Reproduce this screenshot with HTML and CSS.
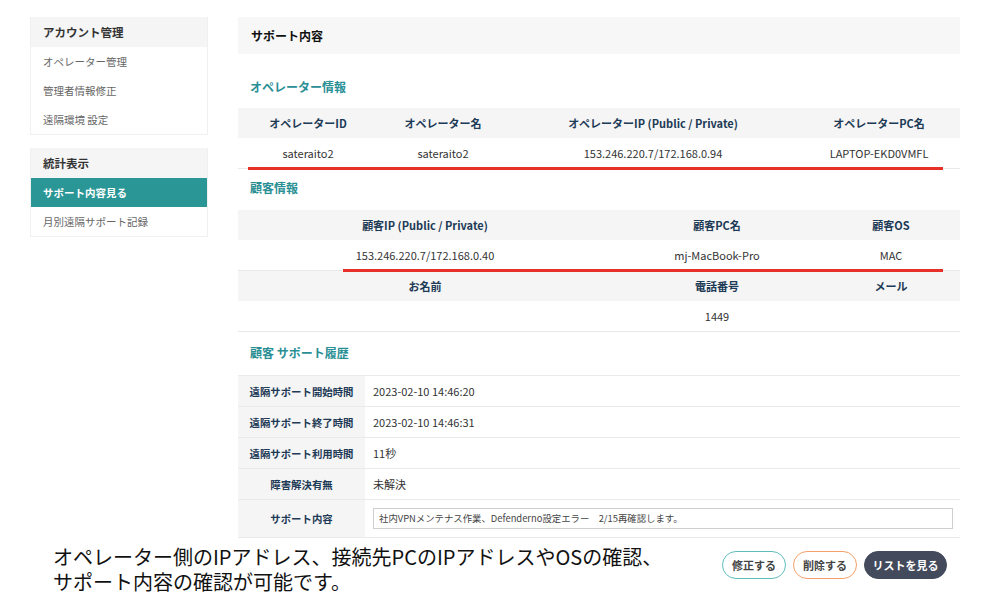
FILE: index.html
```html
<!DOCTYPE html>
<html lang="ja">
<head>
<meta charset="utf-8">
<link rel="stylesheet" href="styles.css">
</head>
<body>
<div class="page">
  <aside class="sidebar">
    <div class="side-box">
      <div class="side-head">アカウント管理</div>
      <div class="side-item">オペレーター管理</div>
      <div class="side-item">管理者情報修正</div>
      <div class="side-item">遠隔環境 設定</div>
    </div>
    <div class="side-box">
      <div class="side-head">統計表示</div>
      <div class="side-item active">サポート内容見る</div>
      <div class="side-item">月別遠隔サポート記録</div>
    </div>
  </aside>
  <main class="main">
    <div class="main-head">サポート内容</div>

    <div class="sec-title t1">オペレーター情報</div>
    <div class="tbl-wrap">
      <div class="grid op">
        <div class="th">オペレーターID</div>
        <div class="th">オペレーター名</div>
        <div class="th">オペレーターIP (Public / Private)</div>
        <div class="th">オペレーターPC名</div>
        <div class="td">sateraito2</div>
        <div class="td">sateraito2</div>
        <div class="td">153.246.220.7/172.168.0.94</div>
        <div class="td">LAPTOP-EKD0VMFL</div>
      </div>
      <span class="redline r1"></span>
    </div>

    <div class="sec-title t2">顧客情報</div>
    <div class="tbl-wrap">
      <div class="grid cu">
        <div class="th">顧客IP (Public / Private)</div>
        <div class="th">顧客PC名</div>
        <div class="th">顧客OS</div>
        <div class="td">153.246.220.7/172.168.0.40</div>
        <div class="td">mj-MacBook-Pro</div>
        <div class="td">MAC</div>
        <div class="th">お名前</div>
        <div class="th">電話番号</div>
        <div class="th">メール</div>
        <div class="td"></div>
        <div class="td">1449</div>
        <div class="td"></div>
      </div>
      <span class="redline r2"></span>
    </div>

    <div class="sec-title t3">顧客 サポート履歴</div>
    <div class="hist">
      <div class="hrow"><div class="hl">遠隔サポート開始時間</div><div class="hv">2023-02-10 14:46:20</div></div>
      <div class="hrow"><div class="hl">遠隔サポート終了時間</div><div class="hv">2023-02-10 14:46:31</div></div>
      <div class="hrow"><div class="hl">遠隔サポート利用時間</div><div class="hv">11秒</div></div>
      <div class="hrow"><div class="hl">障害解決有無</div><div class="hv">未解決</div></div>
      <div class="hrow last"><div class="hl">サポート内容</div><div class="hv"><div class="inp">社内VPNメンテナス作業、Defenderno設定エラー　2/15再確認します。</div></div></div>
    </div>
  </main>
</div>
<div class="footer">
  <div class="caption">
    <div class="cline">オペレーター側のIPアドレス、接続先PCのIPアドレスやOSの確認、</div>
    <div class="cline">サポート内容の確認が可能です。</div>
  </div>
  <div class="btns">
    <span class="btn edit">修正する</span>
    <span class="btn del">削除する</span>
    <span class="btn list">リストを見る</span>
  </div>
</div>
</body>
</html>
```
FILE: styles.css
```css
* { box-sizing: border-box; }
html, body { margin: 0; padding: 0; background: #fff; }
body {
  width: 1000px;
  height: 613px;
  overflow: hidden;
  font-family: "Noto Sans CJK JP", "Noto Sans", sans-serif;
  color: #333;
}
.page {
  display: flex;
  gap: 30px;
  padding: 17px 0 0 30px;
}
.sidebar {
  width: 178px;
  display: flex;
  flex-direction: column;
  gap: 13px;
}
.side-box {
  border: 1px solid #f0f0f0;
  border-top: 0;
  background: #fff;
}
.side-head {
  height: 30px;
  line-height: 30px;
  background: #f5f5f5;
  padding-left: 12px;
  font-size: 11.5px;
  font-weight: bold;
  color: #333;
}
.side-item {
  height: 29px;
  line-height: 29px;
  padding-left: 12px;
  font-size: 10.5px;
  color: #666;
}
.side-item.active {
  background: #2a9696;
  color: #fff;
  font-weight: bold;
}
.main {
  width: 722px;
}
.main-head {
  height: 37px;
  line-height: 37px;
  background: #f7f7f7;
  padding-left: 13px;
  font-size: 12px;
  font-weight: bold;
  color: #111;
}
.sec-title {
  padding-left: 12px;
  line-height: 18px;
  font-size: 12px;
  font-weight: bold;
  color: #2a8f95;
}
.t1 { padding-top: 24px; padding-bottom: 12px; }
.t2 { padding-top: 10px; padding-bottom: 13px; }
.t3 { padding-top: 12px; padding-bottom: 13px; }
.tbl-wrap { position: relative; }
.grid { display: grid; }
.grid.op { grid-template-columns: 140px 130px 290px 162px; }
.grid.cu { grid-template-columns: 374px 210px 138px; }
.th {
  height: 30px;
  line-height: 30px;
  background: #f5f5f5;
  text-align: center;
  font-size: 11px;
  font-weight: bold;
  color: #1d3a56;
}
.td {
  height: 31px;
  line-height: 30px;
  text-align: center;
  font-size: 11px;
  color: #333;
  border-bottom: 1px solid #e8e8e8;
}
.redline {
  position: absolute;
  height: 3px;
  background: #e8302a;
}
.r1 { left: 10px; width: 695px; top: 59px; }
.r2 { left: 105px; width: 600px; top: 59px; }
.hist { border-top: 1px solid #eaeaea; }
.hrow {
  display: flex;
  height: 31px;
  border-bottom: 1px solid #eaeaea;
}
.hrow.last { height: 38px; }
.hl {
  width: 127px;
  background: #f5f5f5;
  display: flex;
  align-items: center;
  justify-content: center;
  font-size: 10.4px;
  font-weight: bold;
  color: #1d3a56;
  white-space: nowrap;
}
.hv {
  flex: 1;
  display: flex;
  align-items: center;
  padding-left: 8px;
  font-size: 11px;
  color: #333;
}
.inp {
  width: 580px;
  height: 21px;
  line-height: 19px;
  border: 1px solid #cfcfcf;
  padding-left: 5px;
  font-size: 9.4px;
  color: #444;
}
.footer {
  display: flex;
  align-items: flex-start;
  justify-content: space-between;
  padding: 6px 53px 0 53px;
}
.caption {
  font-size: 20px;
  color: #111;
}
.cline {
  height: 25px;
  line-height: 25px;
  white-space: nowrap;
}
.btns {
  display: flex;
  gap: 7px;
  margin-top: 7px;
}
.btn {
  height: 28px;
  line-height: 26px;
  border-radius: 14px;
  border: 1px solid;
  text-align: center;
  font-size: 11px;
  font-weight: bold;
  color: #444;
}
.btn.edit { width: 64px; border-color: #5fbcbc; }
.btn.del { width: 64px; border-color: #f5a06a; }
.btn.list { width: 83px; border-color: #434a5c; background: #434a5c; color: #fff; }
```
